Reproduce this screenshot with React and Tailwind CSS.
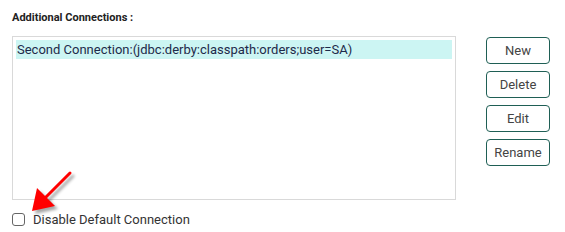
import React from "react";

export default function App() {
  return (
    <div className="relative w-[565px] h-[232px] bg-white" style={{ fontFamily: "Roboto, 'Liberation Sans', sans-serif" }}>
      <div className="pl-[12px] pt-[11px]">
        <div className="text-[11px] leading-[13px] font-bold text-[#222]">Additional Connections :</div>
        <div className="flex mt-[12px]">
          <div className="w-[444px] h-[164px] border border-[#d9d9d9] p-[3px]">
            <div className="h-[19px] bg-[#ccf5f3] text-[13px] leading-[19px] text-[#1e2a4a] pl-[1px]">
              Second Connection:(jdbc:derby:classpath:orders;user=SA)
            </div>
          </div>
          <div className="ml-[30px] mt-[1px] flex flex-col gap-[7px]">
            {["New", "Delete", "Edit", "Rename"].map((t) => (
              <button
                key={t}
                className="w-[64px] h-[27px] border border-[#1f5f55] rounded-[4px] text-[13px] text-[#444] flex items-center justify-center"
              >
                {t}
              </button>
            ))}
          </div>
        </div>
        <div className="flex items-center mt-[12px]">
          <div className="w-[13px] h-[13px] border border-[#666] rounded-[3px] bg-white" />
          <span className="ml-[8px] text-[13px] leading-[15px] text-[#333]">Disable Default Connection</span>
        </div>
      </div>
      <svg className="absolute left-0 top-0" width="565" height="232" viewBox="0 0 565 232">
        <defs>
          <filter id="sh" x="-50%" y="-50%" width="200%" height="200%">
            <feGaussianBlur stdDeviation="1.5" />
          </filter>
        </defs>
        <g transform="translate(3,3)" opacity="0.35" filter="url(#sh)">
          <line x1="70" y1="173" x2="44" y2="199" stroke="#000" strokeWidth="3" strokeLinecap="round" />
          <polygon points="32,211 37,188 55,206" fill="#000" />
        </g>
        <line x1="70" y1="173" x2="44" y2="199" stroke="#f00" strokeWidth="3" strokeLinecap="round" />
        <polygon points="32,211 37,188 55,206" fill="#f00" />
      </svg>
    </div>
  );
}
